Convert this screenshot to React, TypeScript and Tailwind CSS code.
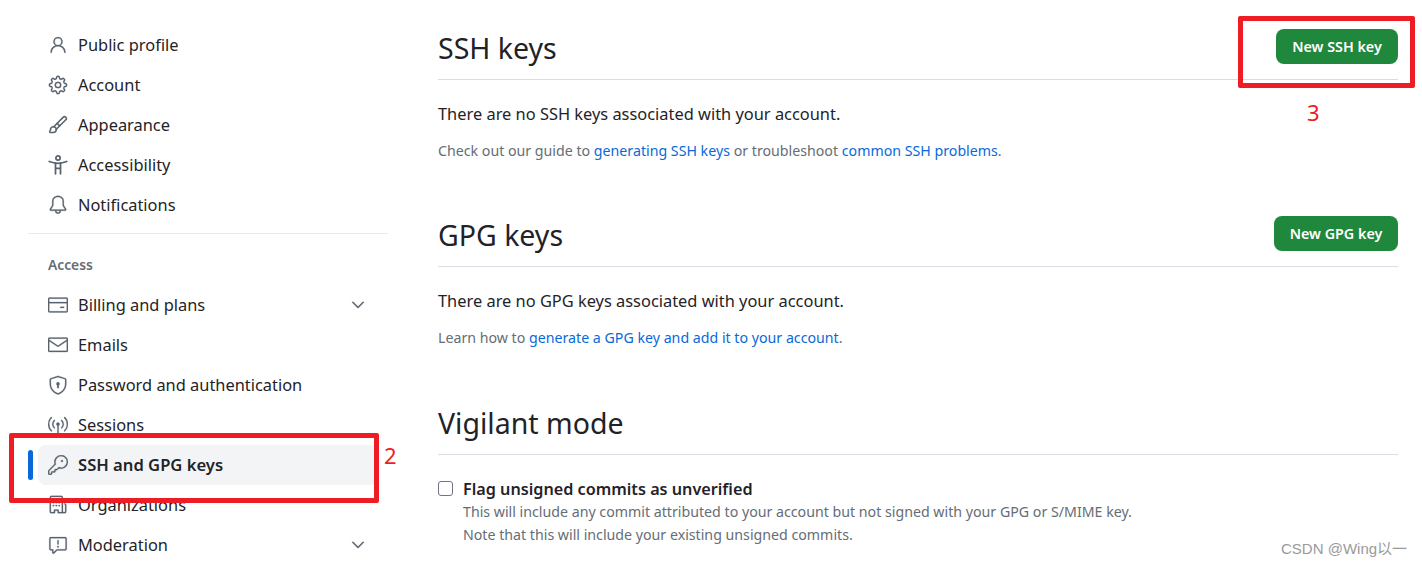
import {
  GoPerson,
  GoGear,
  GoBell,
  GoCreditCard,
  GoMail,
  GoShieldLock,
  GoBroadcast,
  GoKey,
  GoOrganization,
  GoReport,
  GoChevronDown,
} from "react-icons/go";

function BrushIcon({ size, className }: { size: number; className?: string }) {
  return (
    <svg width={size} height={size} viewBox="0 0 24 24" fill="none" stroke="currentColor" strokeLinecap="round" strokeLinejoin="round" className={className}>
      <g strokeWidth="1.9">
        <path d="m11 10 3 3" />
        <path d="M6.5 21A3.5 3.5 0 1 0 3 17.5a2.62 2.62 0 0 1-.708 1.792A1 1 0 0 0 3 21z" />
        <path d="M9.969 17.031 21.378 5.624a1 1 0 0 0-3.002-3.002L6.967 14.031" />
      </g>
    </svg>
  );
}

function AccessIcon({ size, className }: { size: number; className?: string }) {
  return (
    <svg width={size} height={size} viewBox="0 0 16 16" fill="none" stroke="currentColor" strokeLinecap="round" className={className}>
      <g strokeWidth="1.4">
        <circle cx="8" cy="2.4" r="1.7" />
        <path d="M1 5.2C3 6 5.5 6.6 8 6.6s5-.6 7-1.4" />
        <path d="M6 6.5V15M10 6.5V15M6 10.6h4" />
      </g>
    </svg>
  );
}

type NavIcon = (props: { size: number; className?: string }) => React.ReactNode;

function NavItem({ icon: Icon, label, chevron, active }: { icon: NavIcon; label: string; chevron?: boolean; active?: boolean }) {
  return (
    <div className={`relative flex h-10 items-center ml-[10px] w-[340px] rounded-lg ${active ? "bg-[#f3f4f6]" : ""}`}>
      {active && <span className="absolute left-[-10px] top-[5px] h-[30px] w-[5px] rounded-full bg-[#0969da]" />}
      <Icon size={20} className="ml-[10px] shrink-0 stroke-[0.3] text-[#59636e]" />
      <span className={`ml-[10px] flex-1 text-[#1f2328] ${active ? "text-[16.6px] font-semibold" : "text-[16.4px]"}`}>{label}</span>
      {chevron && <GoChevronDown size={20} className="mr-[10px] stroke-[0.3] text-[#59636e]" />}
    </div>
  );
}

function SectionHead({ title, button, buttonClass }: { title: string; button?: string; buttonClass?: string }) {
  return (
    <div className="flex h-[51px] items-start justify-between border-b border-[#d8dee4]">
      <h2 className="text-[28.5px] font-normal leading-[38px] text-[#1f2328]">{title}</h2>
      {button && (
        <button className={`h-[35px] rounded-lg bg-[#1f883d] text-[14.3px] font-semibold text-white ${buttonClass}`}>
          {button}
        </button>
      )}
    </div>
  );
}

export default function App() {
  return (
    <div className="relative flex h-[568px] w-[1422px] overflow-hidden bg-white font-['Noto_Sans','Noto_Sans_CJK_SC',sans-serif]">
      <aside className="ml-[28px] w-[360px] shrink-0 pt-[25px]">
        <NavItem icon={GoPerson} label="Public profile" />
        <NavItem icon={GoGear} label="Account" />
        <NavItem icon={BrushIcon} label="Appearance" />
        <NavItem icon={AccessIcon} label="Accessibility" />
        <NavItem icon={GoBell} label="Notifications" />
        <div className="mt-[8px] border-t border-[#e7e9ec]" />
        <div className="ml-[20px] mt-[21px] h-[20px] text-[13.8px] font-semibold leading-[20px] text-[#656d76]">Access</div>
        <div className="mt-[10px]">
          <NavItem icon={GoCreditCard} label="Billing and plans" chevron />
          <NavItem icon={GoMail} label="Emails" />
          <NavItem icon={GoShieldLock} label="Password and authentication" />
          <NavItem icon={GoBroadcast} label="Sessions" />
          <NavItem icon={GoKey} label="SSH and GPG keys" active />
          <NavItem icon={GoOrganization} label="Organizations" />
          <NavItem icon={GoReport} label="Moderation" chevron />
        </div>
      </aside>

      <main className="ml-[50px] w-[960px] pt-[29px]">
        <SectionHead title="SSH keys" button="New SSH key" buttonClass="w-[122px]" />
        <p className="mt-[22px] text-[16.4px] leading-[24px] text-[#1f2328]">There are no SSH keys associated with your account.</p>
        <p className="mt-[15px] text-[14.2px] leading-[20px] text-[#656d76]">
          Check out our guide to <a className="text-[#0969da]">generating SSH keys</a> or troubleshoot{" "}
          <a className="text-[#0969da]">common SSH problems</a>.
        </p>

        <div className="mt-[55px]">
          <SectionHead title="GPG keys" button="New GPG key" buttonClass="w-[124px]" />
        </div>
        <p className="mt-[22px] text-[16.4px] leading-[24px] text-[#1f2328]">There are no GPG keys associated with your account.</p>
        <p className="mt-[15px] text-[14.2px] leading-[20px] text-[#656d76]">
          Learn how to <a className="text-[#0969da]">generate a GPG key and add it to your account</a>.
        </p>

        <div className="mt-[56px]">
          <SectionHead title="Vigilant mode" />
        </div>
        <div className="mt-[22px] flex">
          <span className="mt-[4px] h-[15px] w-[15px] rounded-[3px] border border-[#6e7681] bg-white" />
          <div className="ml-[10px]">
            <div className="text-[16.2px] font-semibold leading-[24px] text-[#1f2328]">Flag unsigned commits as unverified</div>
            <p className="mt-[-1px] text-[14.2px] leading-[23px] text-[#656d76]">
              This will include any commit attributed to your account but not signed with your GPG or S/MIME key.
              <br />
              Note that this will include your existing unsigned commits.
            </p>
          </div>
        </div>
      </main>

      {/* red annotation boxes pasted over the screenshot */}
      <div className="absolute left-[9px] top-[433px] h-[70px] w-[370px] rounded-[2px] border-[5px] border-[#ee1c25]" />
      <div className="absolute left-[384px] top-[441px] text-[22px] leading-[28px] text-[#ee1c25]">2</div>
      <div className="absolute left-[1238px] top-[16px] h-[72px] w-[177px] rounded-[2px] border-[5px] border-[#ee1c25]" />
      <div className="absolute left-[1307px] top-[98px] text-[22px] leading-[28px] text-[#ee1c25]">3</div>

      <div className="absolute left-[1281px] top-[539px] font-['Liberation_Sans','Noto_Sans_CJK_SC',sans-serif] text-[15px] leading-[20px] text-[#9a9a9a]">CSDN @Wing以一</div>
    </div>
  );
}
